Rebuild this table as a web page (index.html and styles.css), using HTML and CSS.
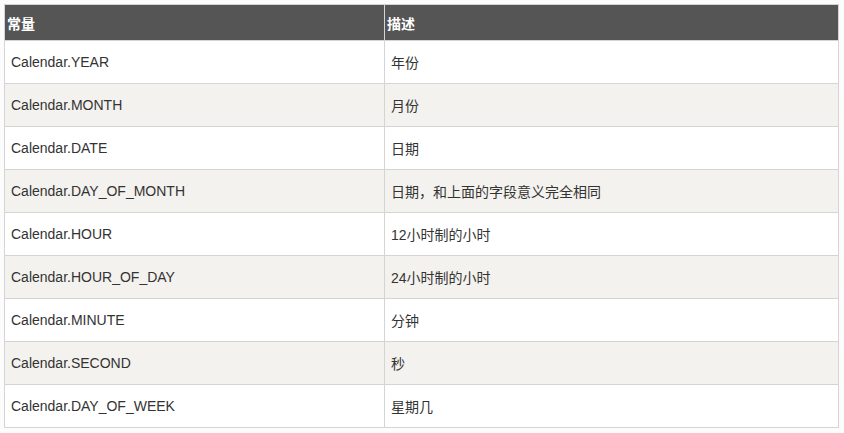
FILE: index.html
```html
<!DOCTYPE html>
<html lang="zh-CN">
<head>
<meta charset="utf-8">
<title>Calendar 常量</title>
<link rel="stylesheet" href="styles.css">
</head>
<body>
<table class="ref-table">
  <colgroup>
    <col class="col-const">
    <col class="col-desc">
  </colgroup>
  <thead>
    <tr><th>常量</th><th>描述</th></tr>
  </thead>
  <tbody>
    <tr><td>Calendar.YEAR</td><td>年份</td></tr>
    <tr><td>Calendar.MONTH</td><td>月份</td></tr>
    <tr><td>Calendar.DATE</td><td>日期</td></tr>
    <tr><td>Calendar.DAY_OF_MONTH</td><td>日期，和上面的字段意义完全相同</td></tr>
    <tr><td>Calendar.HOUR</td><td>12小时制的小时</td></tr>
    <tr><td>Calendar.HOUR_OF_DAY</td><td>24小时制的小时</td></tr>
    <tr><td>Calendar.MINUTE</td><td>分钟</td></tr>
    <tr><td>Calendar.SECOND</td><td>秒</td></tr>
    <tr><td>Calendar.DAY_OF_WEEK</td><td>星期几</td></tr>
  </tbody>
</table>
</body>
</html>
```
FILE: styles.css
```css
html, body {
  margin: 0;
  padding: 0;
  background: #fcfcfc;
}
body {
  padding: 4px;
  font-family: "Liberation Sans", Arial, "Noto Sans CJK SC", sans-serif;
  font-size: 14px;
  color: #333;
}
.ref-table {
  border-collapse: collapse;
  table-layout: fixed;
  width: 835px;
}
.col-const { width: 380px; }
.ref-table th,
.ref-table td {
  border: 1px solid #d4d4d4;
  text-align: left;
  vertical-align: middle;
  white-space: nowrap;
}
.ref-table th {
  background: #555;
  color: #fff;
  font-weight: bold;
  height: 36px;
  padding: 0 2px;
  box-sizing: border-box;
}
.ref-table td {
  background: #fff;
  height: 42px;
  padding: 0 6px;
}
.ref-table tbody tr:nth-child(even) td {
  background: #f4f2ee;
}
```
